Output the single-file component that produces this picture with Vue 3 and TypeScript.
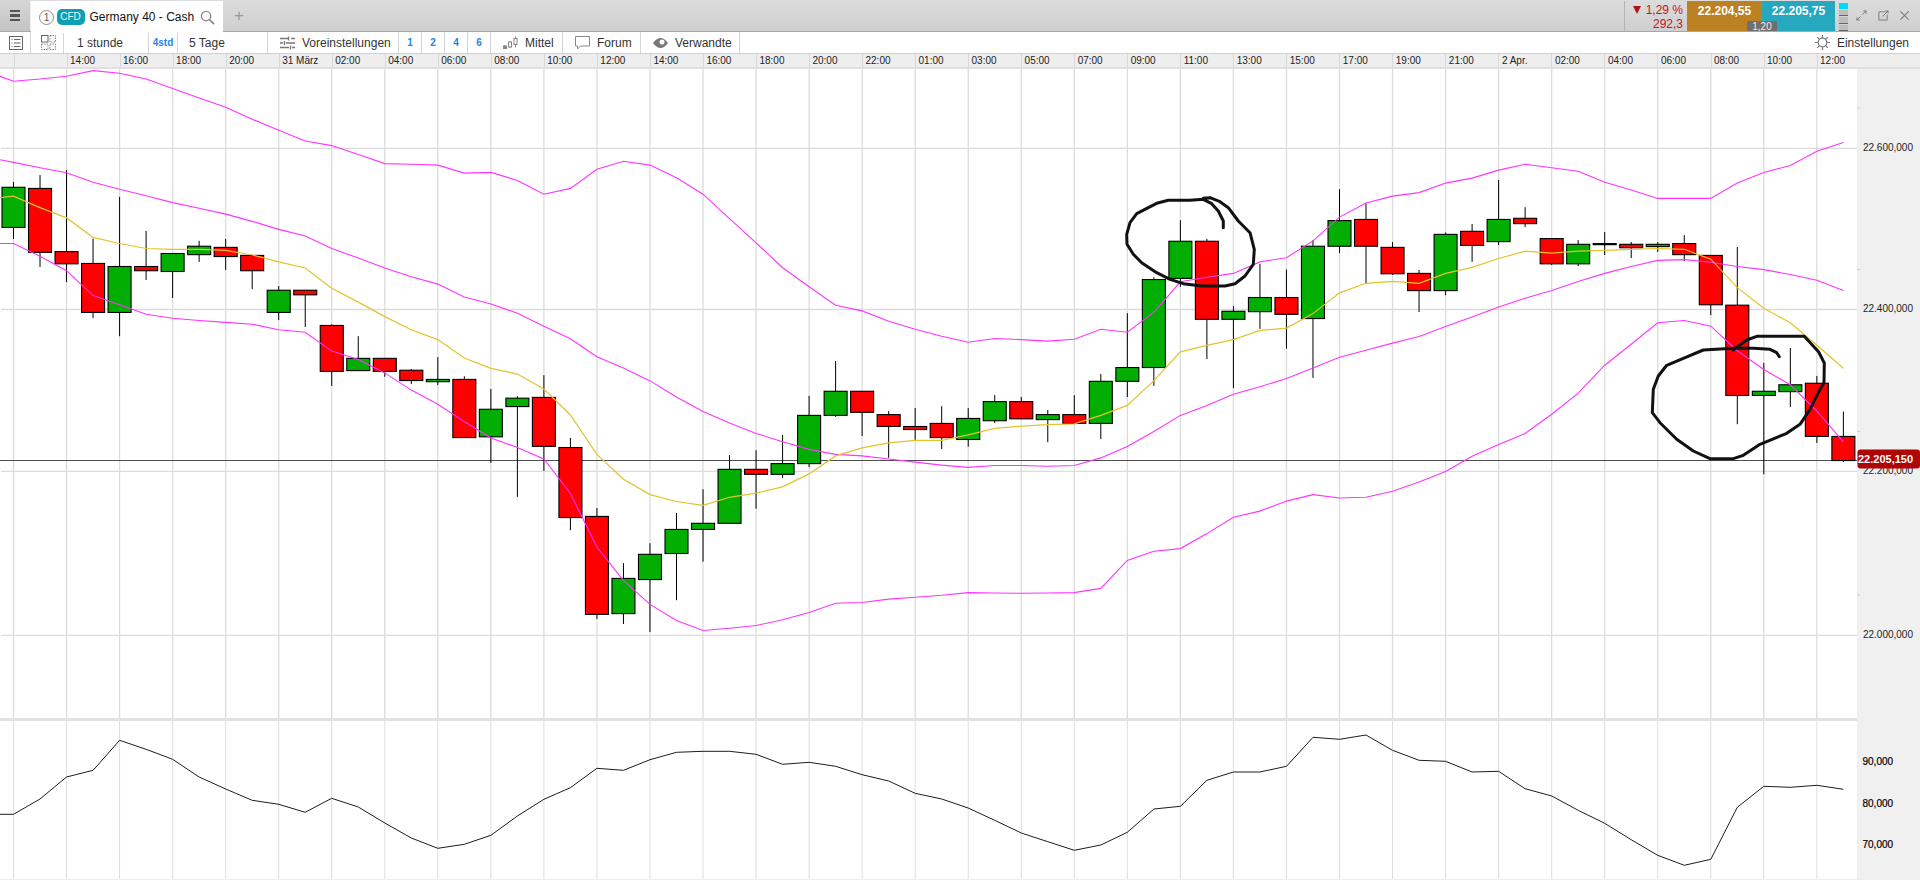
<script setup lang="ts">
// readings are taken from a 2.45 x 2.613 enlargement of the chart, so they are
// converted back to page pixels here
const STEP = 26.52;
const cx = (i: number) => 13.5 + STEP * i;
const py = (z: number) => 60 + z / 2.613;
const ry = (z: number) => 660 + z / 3;

type Candle = [string, number, number, number, number];

const rawCandles: Candle[] = [
  ["g", 330, 435, 316, 465], ["r", 333, 500, 298, 538], ["r", 498, 530, 285, 578], ["r", 529, 657, 464, 672],
  ["g", 537, 657, 355, 719], ["r", 537, 548, 444, 572], ["g", 503, 550, 503, 619], ["g", 484, 506, 470, 525],
  ["r", 487, 511, 465, 546], ["r", 508, 548, 508, 596], ["g", 599, 657, 588, 677], ["r", 599, 611, 599, 695],
  ["r", 691, 811, 688, 849], ["g", 777, 809, 719, 809], ["r", 777, 811, 777, 825], ["r", 808, 835, 805, 844],
  ["g", 832, 838, 774, 847], ["r", 832, 984, 824, 984], ["g", 910, 982, 857, 1050], ["g", 881, 903, 876, 1139],
  ["r", 879, 1007, 821, 1071], ["r", 1010, 1193, 985, 1226], ["r", 1190, 1446, 1168, 1458], ["g", 1352, 1444, 1312, 1471],
  ["g", 1289, 1355, 1260, 1492], ["g", 1224, 1287, 1181, 1409], ["g", 1208, 1224, 1119, 1308], ["g", 1067, 1208, 1030, 1208],
  ["r", 1067, 1080, 1017, 1170], ["g", 1052, 1080, 977, 1090], ["g", 926, 1052, 875, 1061], ["g", 863, 926, 784, 930],
  ["r", 863, 918, 863, 980], ["r", 924, 955, 915, 1037], ["r", 955, 963, 907, 990], ["r", 947, 984, 902, 1014],
  ["g", 934, 989, 907, 1008], ["g", 890, 940, 873, 946], ["r", 890, 935, 878, 935], ["g", 924, 937, 912, 996],
  ["r", 924, 947, 873, 947], ["g", 837, 947, 818, 988], ["g", 801, 837, 659, 878], ["g", 571, 801, 565, 849],
  ["g", 471, 568, 416, 590], ["r", 471, 675, 465, 779], ["g", 654, 675, 640, 855], ["g", 618, 655, 530, 700],
  ["r", 618, 662, 545, 752], ["g", 484, 673, 468, 828], ["g", 417, 484, 335, 502], ["r", 414, 484, 372, 581],
  ["r", 487, 556, 473, 559], ["r", 555, 600, 546, 656], ["g", 453, 600, 448, 612], ["r", 445, 482, 426, 525],
  ["g", 414, 472, 311, 481], ["r", 411, 425, 382, 434], ["r", 464, 530, 464, 533], ["g", 479, 530, 468, 536],
  ["g", 477, 480, 447, 507], ["r", 479, 488, 473, 515], ["g", 479, 485, 473, 499], ["r", 477, 506, 455, 523],
  ["r", 508, 637, 508, 664], ["r", 638, 874, 486, 949], ["g", 863, 874, 789, 1080], ["g", 846, 864, 750, 904],
  ["r", 842, 981, 823, 998], ["r", 981, 1044, 916, 1048],
];

const candles = rawCandles.map(([kind, top, bottom, wickTop, wickBottom], i) => ({
  x: cx(i),
  fill: kind === "g" ? "#03ae03" : "#ff0000",
  top: py(top),
  height: py(bottom) - py(top),
  wickTop: py(wickTop),
  wickBottom: py(wickBottom),
}));

const upperBand = [53, 47, 40, 25, 32, 47, 72, 97, 121, 152, 181, 209, 221, 244, 268, 270, 272, 293, 291, 312, 348, 333, 283, 262, 272, 305, 348, 412, 475, 540, 590, 638, 653, 680, 701, 719, 735, 725, 728, 732, 727, 701, 709, 657, 577, 565, 555, 525, 514, 470, 408, 371, 353, 344, 319, 306, 285, 270, 279, 288, 317, 337, 359, 359, 359, 319, 291, 273, 236, 213];
const midBand = [265, 279, 292, 317, 335, 352, 370, 385, 400, 419, 440, 457, 490, 515, 541, 564, 583, 617, 635, 659, 693, 726, 773, 802, 836, 878, 916, 946, 973, 995, 1015, 1028, 1032, 1040, 1048, 1056, 1062, 1057, 1057, 1059, 1057, 1037, 1007, 968, 926, 900, 871, 851, 830, 802, 774, 756, 737, 720, 694, 669, 643, 620, 600, 576, 555, 537, 521, 519, 526, 537, 545, 558, 573, 600];
const lowerBand = [477, 510, 548, 613, 637, 662, 672, 678, 683, 688, 702, 709, 758, 780, 815, 860, 897, 942, 985, 1010, 1040, 1130, 1270, 1358, 1420, 1462, 1488, 1482, 1475, 1460, 1441, 1417, 1415, 1406, 1401, 1396, 1389, 1390, 1391, 1390, 1389, 1378, 1305, 1281, 1274, 1235, 1192, 1176, 1150, 1133, 1142, 1140, 1124, 1100, 1073, 1033, 1002, 973, 923, 868, 795, 740, 684, 678, 693, 757, 806, 846, 915, 995];
const average = [353, 383, 410, 461, 477, 490, 492, 492, 495, 507, 525, 541, 594, 630, 668, 702, 728, 776, 803, 818, 857, 925, 1028, 1093, 1133, 1151, 1161, 1140, 1129, 1113, 1079, 1032, 1011, 998, 991, 991, 977, 960, 954, 950, 948, 926, 900, 835, 760, 743, 728, 704, 698, 660, 606, 581, 576, 581, 555, 539, 516, 497, 502, 497, 495, 492, 490, 492, 518, 592, 646, 684, 743, 803];
const oscillator = [457, 411, 345, 325, 235, 262, 292, 345, 381, 415, 427, 451, 409, 435, 483, 528, 559, 547, 520, 462, 412, 377, 319, 325, 293, 271, 268, 268, 277, 307, 301, 313, 338, 357, 394, 411, 438, 475, 513, 539, 565, 549, 511, 441, 433, 355, 330, 330, 313, 226, 232, 219, 265, 295, 298, 330, 328, 380, 402, 445, 484, 533, 580, 610, 592, 436, 373, 376, 370, 382];

const linePoints = (values: number[], toY: (z: number) => number, lead: number) =>
  `0,${toY(lead).toFixed(1)} ` + values.map((v, i) => `${cx(i).toFixed(1)},${toY(v).toFixed(1)}`).join(" ");

const upperLine = linePoints(upperBand, py, 40);
const midLine = linePoints(midBand, py, 258);
const lowerLine = linePoints(lowerBand, py, 477);
const averageLine = linePoints(average, py, 357);
const oscillatorLine = linePoints(oscillator, ry, 457);

// the two hand-drawn marks, read from 3x crops
const scribble = (pts: number[][], left: number, top: number) =>
  pts.map(([x, y]) => `${(left + x / 3).toFixed(1)},${(top + y / 3).toFixed(1)}`).join(" ");

const circleOne = scribble(
  [[325, 110], [325, 90], [310, 60], [290, 38], [265, 25], [225, 28], [160, 28], [125, 37], [100, 50], [65, 68], [45, 95], [35, 130], [36, 160], [55, 190], [80, 215], [125, 245], [165, 265], [205, 278], [260, 285], [330, 285], [360, 278], [390, 255], [415, 220], [418, 175], [405, 125], [370, 90], [340, 50], [315, 32], [285, 20], [265, 22]],
  1115,
  190,
);
const circleTwo = scribble(
  [[418, 92], [410, 80], [390, 70], [340, 67], [280, 67], [190, 72], [130, 97], [80, 118], [55, 150], [40, 190], [37, 260], [60, 290], [110, 340], [160, 375], [210, 398], [280, 398], [310, 388], [360, 355], [440, 322], [480, 295], [510, 250], [540, 190], [552, 170], [553, 111], [536, 78], [493, 31], [350, 31], [320, 42], [280, 72]],
  1640,
  325,
);

const gridX = Array.from({ length: 35 }, (_, n) => cx(n * 2));
const mainGridY = [147.3, 308.5, 470.3, 634.4];
const minorTicks = [107, 268.6, 430.5, 594];
const priceLabels = [
  { y: 147, text: "22.600,000" },
  { y: 308, text: "22.400,000" },
  { y: 470, text: "22.200,000" },
  { y: 634, text: "22.000,000" },
];
const rsiLabels = [
  { y: 759, text: "90,000" },
  { y: 801, text: "80,000" },
  { y: 842, text: "70,000" },
];
const timeLabels = ["", "14:00", "16:00", "18:00", "20:00", "31 März", "02:00", "04:00", "06:00", "08:00", "10:00", "12:00", "14:00", "16:00", "18:00", "20:00", "22:00", "01:00", "03:00", "05:00", "07:00", "09:00", "11:00", "13:00", "15:00", "17:00", "19:00", "21:00", "2 Apr.", "02:00", "04:00", "06:00", "08:00", "10:00", "12:00"];
</script>

<template>
  <div class="app">
    <header class="topbar">
      <button class="menu-btn" aria-label="Menü">
        <span></span><span></span><span></span>
      </button>
      <div class="tab">
        <span class="tab-num">1</span>
        <span class="tab-cfd">CFD</span>
        <span class="tab-name">Germany 40 - Cash</span>
        <svg class="tab-search" viewBox="0 0 16 16" width="15" height="15" fill="none" stroke="#8a8a8a" stroke-width="1.4">
          <circle cx="6.5" cy="6.5" r="5" />
          <path d="M10.2 10.2L15 15" stroke-width="1.8" />
        </svg>
      </div>
      <div class="add-tab">+</div>
      <div class="quote">
        <div class="quote-change">
          <div class="quote-pct"><span class="quote-arrow"></span>1,29 %</div>
          <div>292,3</div>
        </div>
        <div class="quote-box bid">22.204,55</div>
        <div class="quote-box ask">22.205,75</div>
        <div class="spread">1,20</div>
      </div>
      <div class="depth">
        <span class="depth-on"></span><span></span><span></span><span></span>
      </div>
      <div class="win-icons">
        <svg viewBox="0 0 12 12" width="11" height="11" fill="none" stroke="#777" stroke-width="1">
          <path d="M7 5l4-4M8 1h3v3M5 7l-4 4M1 8v3h3" />
        </svg>
        <svg viewBox="0 0 12 12" width="11" height="11" fill="none" stroke="#777" stroke-width="1">
          <path d="M8 2H1v9h9V5M5 7l6-6M8 1h3v3" />
        </svg>
        <svg viewBox="0 0 12 12" width="11" height="11" fill="none" stroke="#777" stroke-width="1.1">
          <path d="M1.5 1.5l9 9M10.5 1.5l-9 9" />
        </svg>
      </div>
    </header>

    <nav class="toolbar">
      <div class="cell w-list">
        <svg viewBox="0 0 14 14" width="14" height="14" fill="none" stroke="#666" stroke-width="1">
          <rect x="0.5" y="0.5" width="13" height="13" />
          <path d="M2.5 3.5h1M5 3.5h6.5M2.5 7h1M5 7h6.5M2.5 10.5h1M5 10.5h6.5" />
        </svg>
      </div>
      <div class="cell w-grid">
        <svg viewBox="0 0 15 15" width="15" height="15" fill="none" stroke="#888" stroke-width="1">
          <rect x="0.5" y="0.5" width="6.5" height="6.5" stroke="#666" />
          <path d="M9 .5h5.5V7H9zM.5 9H7v5.5H.5zM9 9h5.5v5.5H9z" stroke-dasharray="1.5 1" />
        </svg>
      </div>
      <div class="cell w-period">1 stunde</div>
      <div class="cell w-quick blue">4std</div>
      <div class="cell w-range">5 Tage</div>
      <div class="cell w-presets">
        <svg viewBox="0 0 15 14" width="15" height="14" fill="none" stroke="#777" stroke-width="1.3">
          <path d="M0 2.5h8M11 2.5h4M0 7h3M6 7h9M0 11.5h9M12 11.5h3M8.5 0.5v4M4.5 5v4M10.5 9.5v4" />
        </svg>
        <span>Voreinstellungen</span>
      </div>
      <div class="cell w-num blue">1</div>
      <div class="cell w-num blue">2</div>
      <div class="cell w-num blue">4</div>
      <div class="cell w-num blue">6</div>
      <div class="cell w-size">
        <svg viewBox="0 0 15 14" width="15" height="14" fill="none" stroke="#888" stroke-width="1">
          <path d="M2 9v4M7 5v7M12.5 0.5v11" />
          <rect x="0.5" y="10" width="3" height="2.5" fill="#888" />
          <rect x="5.5" y="6" width="3" height="5" fill="#fff" />
          <rect x="11" y="2.5" width="3" height="6" fill="#fff" />
        </svg>
        <span>Mittel</span>
      </div>
      <div class="cell w-forum">
        <svg viewBox="0 0 15 14" width="15" height="14" fill="#fff" stroke="#888" stroke-width="1">
          <path d="M.5 .5h14v9.5H5.5l-3 3v-3h-2z" />
        </svg>
        <span>Forum</span>
      </div>
      <div class="cell w-related">
        <svg viewBox="0 0 15 10" width="15" height="10">
          <path d="M0 5C2.5 1.5 5 0 7.5 0S12.5 1.5 15 5c-2.5 3.5-5 5-7.5 5S2.5 8.5 0 5z" fill="#777" />
          <circle cx="9" cy="4" r="2.5" fill="#fff" />
        </svg>
        <span>Verwandte</span>
      </div>
      <div class="cell-fill"></div>
      <div class="settings">
        <svg viewBox="0 0 15 15" width="15" height="15" fill="none" stroke="#777" stroke-width="1.2">
          <circle cx="7.5" cy="7.5" r="4.3" />
          <path d="M7.5 0v2.800M7.500 12.200V15M0 7.500h2.800M12.200 7.500H15M2.200 2.200l2 2M10.800 10.800l2 2M2.200 12.800l2-2M10.800 4.200l2-2" />
        </svg>
        <span>Einstellungen</span>
      </div>
    </nav>

    <div class="time-axis">
      <div v-for="(label, n) in timeLabels" :key="n" class="time-cell">{{ label }}</div>
    </div>

    <svg class="panel-main" viewBox="0 68 1920 649" width="1920" height="649">
      <rect x="1857" y="68" width="63" height="649" fill="#f0f0f0" />
      <line v-for="x in gridX" :key="x" :x1="x" :x2="x" y1="68" y2="717" class="grid" />
      <line v-for="y in mainGridY" :key="y" x1="1" x2="1857" :y1="y" :y2="y" class="grid" />
      <line v-for="y in minorTicks" :key="y" x1="1857" x2="1860" :y1="y" :y2="y" stroke="#ccc" />

      <line x1="0" x2="1857" y1="459.5" y2="459.5" stroke="#222" stroke-width="0.8" />

      <g v-for="c in candles" :key="c.x">
        <line :x1="c.x" :x2="c.x" :y1="c.wickTop" :y2="c.wickBottom" stroke="#000" stroke-width="1" />
        <rect :x="c.x - 11.5" :y="c.top" width="23" :height="c.height" :fill="c.fill" stroke="#000" stroke-width="1.1" />
      </g>

      <polyline :points="upperLine" class="band" />
      <polyline :points="midLine" class="band" />
      <polyline :points="lowerLine" class="band" />
      <polyline :points="averageLine" class="avg" />

      <polyline :points="circleOne" class="ink" />
      <polyline :points="circleTwo" class="ink" />

      <text v-for="l in priceLabels" :key="l.text" x="1913" :y="l.y + 3" text-anchor="end" class="axis-text">{{ l.text }}</text>
      <rect x="1857.5" y="448.5" width="62.5" height="19" rx="3" fill="#b00505" />
      <text x="1858" y="462" class="price-tag">22.205,150</text>
    </svg>

    <div class="panel-sep"></div>

    <svg class="panel-lower" viewBox="0 719 1920 158" width="1920" height="158">
      <rect x="1857" y="719" width="63" height="158" fill="#f0f0f0" />
      <line v-for="x in gridX" :key="x" :x1="x" :x2="x" y1="719" y2="877" class="grid-thin" />
      <polyline :points="oscillatorLine" fill="none" stroke="#1c1c1c" stroke-width="1" />
      <text v-for="l in rsiLabels" :key="l.text" x="1862.5" :y="l.y + 3.5" class="axis-text strong">{{ l.text }}</text>
    </svg>
    <div class="foot"></div>
  </div>
</template>

<style scoped>
.app {
  width: 1920px;
  height: 880px;
  overflow: hidden;
  background: #fff;
  font-family: "Liberation Sans", Arial, sans-serif;
  font-size: 12px;
  color: #333;
}

.topbar {
  display: flex;
  height: 32px;
  background: linear-gradient(#dcdcdc, #cfcfcf);
  border-bottom: 1px solid #a8a8a8;
  box-sizing: border-box;
}

.menu-btn {
  width: 31px;
  padding: 0 0 0 10px;
  border: 0;
  border-right: 1px solid #eee;
  background: linear-gradient(#d6d6d6, #c4c4c4);
  display: flex;
  flex-direction: column;
  justify-content: center;
  gap: 2px;
}

.menu-btn span {
  display: block;
  width: 10px;
  height: 2.5px;
  background: #555;
}

.tab {
  width: 192px;
  height: 32px;
  margin-top: 1px;
  background: #fff;
  display: flex;
  align-items: center;
  padding-left: 8px;
  box-sizing: border-box;
  color: #111;
  position: relative;
  z-index: 1;
}

.tab-num {
  width: 13px;
  height: 13px;
  border: 1.3px solid #8c8c8c;
  border-radius: 50%;
  font-size: 10px;
  line-height: 13px;
  text-align: center;
  color: #555;
}

.tab-cfd {
  margin-left: 2.5px;
  width: 28px;
  height: 16px;
  border-radius: 5px;
  background: #0e9fb3;
  color: #e8f8fb;
  font-size: 10px;
  line-height: 16px;
  text-align: center;
}

.tab-name {
  margin-left: 5px;
}

.tab-search {
  margin-left: 6px;
}

.add-tab {
  width: 32px;
  text-align: center;
  font-size: 17px;
  line-height: 31px;
  color: #999;
}

.quote {
  margin-left: auto;
  display: flex;
  position: relative;
  height: 30px;
  margin-top: 1px;
}

.quote-change {
  width: 63px;
  padding-right: 4px;
  box-sizing: border-box;
  border-left: 1px solid #b5b5b5;
  color: #c4161c;
  font-size: 12px;
  line-height: 14px;
  text-align: right;
  padding-top: 2px;
}

.quote-arrow {
  display: inline-block;
  width: 0;
  height: 0;
  margin-right: 5px;
  border-left: 4.5px solid transparent;
  border-right: 4.5px solid transparent;
  border-top: 8px solid #b01217;
}

.quote-box {
  padding-top: 3px;
  box-sizing: border-box;
  color: #fff;
  font-weight: 700;
  text-align: center;
  line-height: 15px;
}

.bid {
  width: 75px;
  background: #bc8123;
}

.ask {
  width: 73px;
  background: #26a8bf;
}

.spread {
  position: absolute;
  left: 123px;
  bottom: 0;
  width: 30px;
  height: 10px;
  background: #6f6f6f;
  color: #eee;
  font-size: 10px;
  line-height: 11px;
  text-align: center;
}

.depth {
  width: 9px;
  margin: 3px 0 0 4px;
  display: flex;
  flex-direction: column;
  gap: 1px;
  height: 28px;
}

.depth span {
  height: 6px;
  background: #bdbdbd;
  border-bottom: 1px solid #666;
}

.depth .depth-on {
  background: #00d8ff;
  border-bottom: 0;
}

.win-icons {
  width: 72px;
  padding: 0 10px 0 8px;
  box-sizing: border-box;
  display: flex;
  align-items: center;
  justify-content: space-between;
}

.toolbar {
  display: flex;
  height: 21px;
  background: #fff;
  border-bottom: 1px solid #cfcfcf;
  font-size: 12px;
  line-height: 20px;
}

.cell {
  box-sizing: border-box;
  border-right: 1px solid #d5d5d5;
  display: flex;
  align-items: center;
  color: #333;
  flex: none;
}

.w-list { width: 31px; padding-left: 9px; }
.w-grid { width: 33px; padding-left: 10px; }
.w-period { width: 85px; padding-left: 13px; }
.w-quick { width: 29px; justify-content: center; }
.w-range { width: 90px; padding-left: 11px; }
.w-presets { width: 131px; padding-left: 12px; gap: 7px; }
.w-num { width: 23px; justify-content: center; }
.w-size { width: 72px; padding-left: 12px; gap: 7px; }
.w-forum { width: 78px; padding-left: 12px; gap: 7px; }
.w-related { width: 99px; padding-left: 12px; gap: 7px; }

.blue {
  color: #1e87e8;
  font-size: 10px;
  font-weight: 700;
}

.cell-fill {
  flex: 1;
}

.settings {
  display: flex;
  align-items: center;
  gap: 7px;
  padding-right: 11px;
}

.time-axis {
  display: flex;
  height: 13px;
  padding-left: 13.5px;
  background: #eee;
  border-bottom: 2px solid #e0e0e0;
  font-size: 10px;
  line-height: 13px;
  color: #222;
}

.time-cell {
  flex: none;
  width: 53.04px;
  box-sizing: border-box;
  padding-left: 2.5px;
  border-left: 1px solid #d8d8d8;
  white-space: nowrap;
}

.panel-main,
.panel-lower {
  display: block;
}

.grid {
  stroke: #dcdcdc;
  stroke-width: 1.3;
}

.grid-thin {
  stroke: #dedede;
  stroke-width: 1;
}

.band {
  fill: none;
  stroke: #ff33ff;
  stroke-width: 1.1;
}

.avg {
  fill: none;
  stroke: #e2c42a;
  stroke-width: 1.2;
}

.ink {
  fill: none;
  stroke: #111;
  stroke-width: 3;
  stroke-linecap: round;
  stroke-linejoin: round;
}

.axis-text {
  font-size: 10px;
  fill: #222;
}

.axis-text.strong {
  fill: #000;
  stroke: #000;
  stroke-width: 0.2;
}

.price-tag {
  font-size: 11px;
  font-weight: 700;
  fill: #fff;
}

.panel-sep {
  width: 1857px;
  height: 3px;
  background: #e2e2e2;
  box-shadow: 63px 0 0 #f0f0f0;
}

.foot {
  height: 3px;
  background: #eee;
}
</style>
